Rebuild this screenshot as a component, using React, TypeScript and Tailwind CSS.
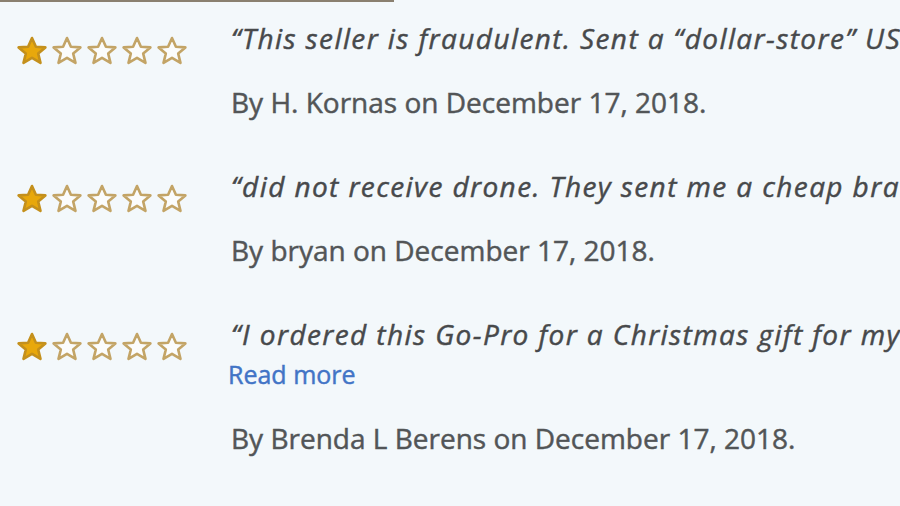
import { Fragment } from 'react';

type Review = {
  quote: string;
  author: string;
  date: string;
  readMore?: boolean;
};

const REVIEWS: Review[] = [
  {
    quote: '“This seller is fraudulent. Sent a “dollar-store” USB drive instead of the real one',
    author: 'H. Kornas',
    date: 'December 17, 2018',
  },
  {
    quote: '“did not receive drone. They sent me a cheap brand of memory card instead',
    author: 'bryan',
    date: 'December 17, 2018',
  },
  {
    quote: '“I ordered this Go-Pro for a Christmas gift for my son and it never came',
    author: 'Brenda L Berens',
    date: 'December 17, 2018',
    readMore: true,
  },
];

function Star({ filled }: { filled: boolean }) {
  return (
    <svg width="34" height="30" viewBox="0 0 34 30" className="shrink-0">
      <path
        d="M17 2 L20.9 10.7 L30.4 11.4 L23.2 17.6 L25.5 26.9 L17 21.8 L8.5 26.9 L10.8 17.6 L3.6 11.4 L13.1 10.7 Z"
        fill={filled ? '#e8a80c' : '#fbfcfc'}
        stroke={filled ? '#c4901c' : '#c3a466'}
        strokeWidth="2.6"
        strokeLinejoin="round"
      />
    </svg>
  );
}

function Stars({ rating }: { rating: number }) {
  return (
    <div className="flex gap-[1px]">
      {[1, 2, 3, 4, 5].map((n) => (
        <Star key={n} filled={n <= rating} />
      ))}
    </div>
  );
}

function App() {
  return (
    <div className="w-[900px] h-[506px] overflow-hidden bg-[#f3f8fb] font-['Open_Sans',sans-serif] [-webkit-text-stroke:0.45px]">
      <div className="h-[2px] w-[394px] bg-[#8a8070]" />

      <div className="flex flex-col pt-[16px]">
        {REVIEWS.map((r, i) => (
          <Fragment key={i}>
            <div className={`flex items-start ${i === REVIEWS.length - 1 ? 'mb-[42px]' : 'mb-[44px]'}`}>
              <div className="w-[231px] shrink-0 pl-[15px] pt-[18px] [-webkit-text-stroke:0px]">
                <Stars rating={1} />
              </div>
              <div className="flex flex-col min-w-0 leading-[40px]">
                <p className="italic text-[28px] tracking-[1.4px] text-[#47494b] whitespace-nowrap">{r.quote}</p>
                {r.readMore && (
                  <a className="text-[#4274c6] text-[25px] leading-[40px] -ml-[3px]">Read more</a>
                )}
                <p className="mt-[24px] text-[28px] text-[#525557] whitespace-nowrap">
                  By {r.author} on {r.date}.
                </p>
              </div>
            </div>
          </Fragment>
        ))}
        <div className="flex">
          <div className="w-[231px] shrink-0" />
          <p className="italic text-[28px] tracking-[1.4px] leading-[40px] text-[#47494b] whitespace-nowrap">“overcharged and never shipped</p>
        </div>
      </div>
    </div>
  );
}

export default App;
